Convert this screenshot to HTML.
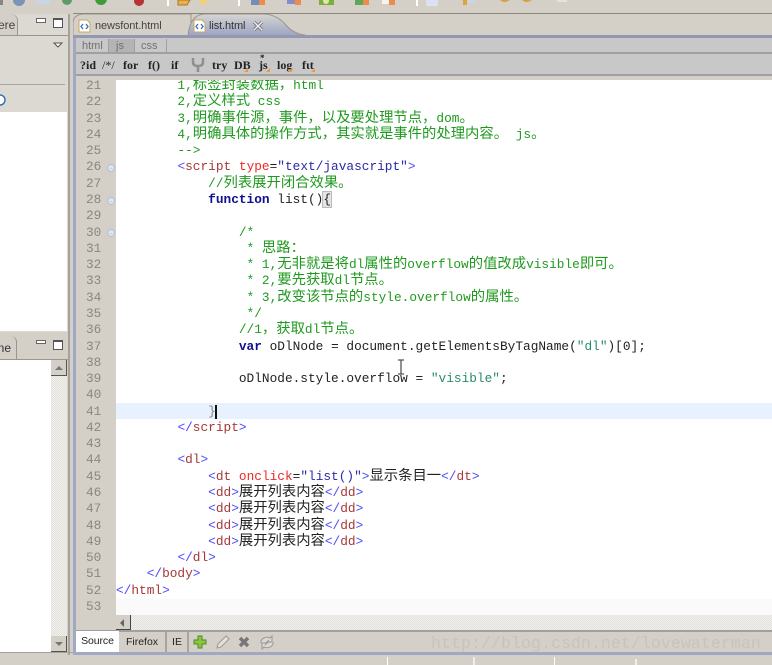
<!DOCTYPE html>
<html><head><meta charset="utf-8">
<style>
html,body{margin:0;padding:0}
body{width:772px;height:665px;overflow:hidden;position:relative;background:#d4d0c8;font-family:"Liberation Sans",sans-serif}
.a{position:absolute}
#code{position:absolute;left:116px;top:80px;width:656px;height:535px;background:#fff;overflow:hidden}
.l{position:absolute;left:0;height:16px;line-height:16px;white-space:pre;font:12.8px/16px "Liberation Mono",monospace;color:#222}
.l i{font:normal 14.33px/0 "Noto Sans CJK SC","WenQuanYi Zen Hei",sans-serif}
.n{position:absolute;left:86px;width:22px;font:12.8px/16px "Liberation Mono",monospace;color:#8a8780;height:16px}
.c{color:#1f9a1f}.b{color:#4a4aff}.t{color:#a83838}.r{color:#f02828}.s{color:#2a2aa8}.g{color:#2a8a6a}.k{color:#101090;font-weight:bold}
.h{background:repeating-conic-gradient(#e2e0db 0 25%,#f2f1ee 0 50%) 0 0/2px 2px}
.tb{position:absolute;top:58px;font:bold 12px/15px "Liberation Serif",serif;color:#222}
.tri{position:absolute;width:0;height:0;border-left:4px solid transparent;border-bottom:4px solid #ef9a3c}
.m{position:absolute;width:6px;height:6px;border-radius:50%;background:linear-gradient(#c9d4e4,#c9d4e4) center/4px 1px no-repeat,#e4e8ee;background-color:#dfe5ee;border:1px solid #b4c0d2;left:107px}
</style></head><body>

<!-- top toolbar clipped icons -->
<svg class="a" style="left:0;top:0" width="772" height="14">
<rect x="0" y="0" width="772" height="13" fill="#d4d0c8"/>
<rect x="0" y="0" width="3" height="5" fill="#8a8780"/>
<circle cx="19" cy="0" r="6" fill="#7c93b8"/>
<rect x="37" y="0" width="13" height="4" fill="#c9d4e4"/>
<circle cx="67" cy="0" r="5" fill="#5f9a6a"/>
<circle cx="101" cy="-1" r="6" fill="#3f9a3a"/>
<circle cx="139" cy="1" r="5" fill="#b8323a"/>
<rect x="167" y="0" width="2" height="6" fill="#fff"/>
<path d="M178 0h12l-3 5h-9z" fill="#e8b050" stroke="#a87820"/>
<path d="M200 0h6l1 4h-7z" fill="#f2d070"/>
<rect x="238" y="0" width="2" height="6" fill="#fff"/>
<rect x="251" y="0" width="12" height="5" fill="#6f8fb8"/><rect x="259" y="0" width="6" height="5" fill="#ee8a4a"/>
<rect x="287" y="0" width="10" height="4" fill="#8a8ac8"/><rect x="295" y="0" width="6" height="5" fill="#ee8a4a"/>
<rect x="319" y="0" width="15" height="5" fill="#7cae3a"/><circle cx="326" cy="1" r="3" fill="#d8e8b0"/>
<rect x="355" y="0" width="10" height="5" fill="#5fa85a"/><rect x="363" y="0" width="6" height="5" fill="#ee8a4a"/>
<rect x="382" y="0" width="9" height="4" fill="#f4f4f4"/><rect x="389" y="0" width="6" height="5" fill="#ee8a4a"/>
<rect x="416" y="0" width="2" height="6" fill="#fff"/>
<rect x="426" y="0" width="12" height="6" fill="#d8e2f0"/>
<rect x="463" y="0" width="4" height="5" fill="#d8a838"/><rect x="467" y="0" width="8" height="3" fill="#c9d4e4"/>
<path d="M500 0h10l-4 2h-3z" fill="#d8a040"/>
<path d="M522 0h10l-4 2h-3z" fill="#d8a040"/>
<rect x="557" y="0" width="10" height="2" fill="#e4e2dd"/>
</svg>
<div class="a" style="left:73px;top:13px;width:699px;height:1px;background:#8a8780"></div>

<!-- left panel top -->
<div class="a" style="left:0;top:14px;width:68px;height:318px;background:#dcd9d2"></div>
<div class="a" style="left:0;top:14px;width:17px;height:21px;background:#d4d0c8;border-right:1px solid #9a968e;border-radius:0 7px 0 0;font:12px/22px 'Liberation Sans',sans-serif;color:#444;overflow:hidden;text-indent:-2px">ere</div>
<div class="a" style="left:0;top:35px;width:68px;height:1px;background:#9a968e"></div>
<div class="a" style="left:36px;top:18px;width:8px;height:3px;border:1px solid #666;background:#fff"></div>
<div class="a" style="left:53px;top:18px;width:8px;height:7px;border:1px solid #555;border-top-width:2px;background:#fff"></div>
<svg class="a" style="left:53px;top:42px" width="11" height="6"><path d="M1 1h8l-4 4z" fill="#fff" stroke="#555"/></svg>
<div class="a" style="left:0;top:84px;width:65px;height:1px;background:#a8a59e"></div>
<svg class="a" style="left:0;top:93px" width="7" height="14"><circle cx="0" cy="7" r="5" fill="#fff" stroke="#3a72b8" stroke-width="1.5"/></svg>
<div class="a" style="left:0;top:112px;width:67px;height:219px;background:#fff"></div>

<!-- left panel bottom -->
<div class="a" style="left:0;top:333px;width:68px;height:319px;background:#d4d0c8;border-radius:0 7px 0 0"></div>
<div class="a" style="left:0;top:336px;width:16px;height:23px;border-right:1px solid #9a968e;border-radius:0 6px 0 0;font:12px/24px 'Liberation Sans',sans-serif;color:#333;overflow:hidden;text-indent:-5px">ine</div>
<div class="a" style="left:36px;top:340px;width:8px;height:2px;border:1px solid #666;background:#fff"></div>
<div class="a" style="left:53px;top:340px;width:8px;height:7px;border:1px solid #555;border-top-width:2px;background:#fff"></div>
<div class="a" style="left:0;top:359px;width:68px;height:1px;background:#9a968e"></div>
<div class="a" style="left:0;top:360px;width:67px;height:292px;background:#fff"></div>
<div class="a h" style="left:51px;top:360px;width:16px;height:292px"></div>
<div class="a" style="left:51px;top:360px;width:15px;height:15px;background:#d4d0c8;border-right:1px solid #555;border-bottom:1px solid #555"></div>
<svg class="a" style="left:54px;top:365px" width="10" height="6"><path d="M1 5h8l-4-4z" fill="#777"/></svg>
<div class="a" style="left:51px;top:636px;width:15px;height:15px;background:#d4d0c8;border-right:1px solid #555;border-bottom:1px solid #555"></div>
<svg class="a" style="left:54px;top:641px" width="10" height="6"><path d="M1 1h8l-4 4z" fill="#777"/></svg>

<!-- dividers -->
<div class="a" style="left:68px;top:14px;width:2px;height:641px;background:#a5a29b"></div>
<div class="a" style="left:70px;top:14px;width:3px;height:641px;background:#d4d0c8"></div>
<div class="a" style="left:73px;top:36px;width:3px;height:619px;background:#a0a8c4"></div>
<div class="a" style="left:0;top:652px;width:73px;height:1px;background:#a5a29b"></div>

<!-- editor tabs -->
<svg class="a" style="left:73px;top:14px" width="699" height="24">
<path d="M0 22V9Q0 1 10 0H118V22z" fill="#d4d0c8" stroke="#9a968e"/>
<defs><linearGradient id="g" x1="0" y1="0" x2="0" y2="1"><stop offset="0" stop-color="#d8d6d2"/><stop offset="1" stop-color="#99a3c4"/></linearGradient></defs>
<path d="M115 22Q117 0 132 0H190Q202 0 211 9Q220 20 232 21V22z" fill="url(#g)" stroke="#9a968e"/>
<rect x="0" y="21" width="699" height="3" fill="#9397b0"/>
</svg>
<svg class="a" style="left:78px;top:19px" width="13" height="14"><path d="M1 1h8l3 3v9H1z" fill="#fff" stroke="#c8a860"/><path d="M5 5L3 7.500l2 2.500M8 5l2 2.500-2 2.500" fill="none" stroke="#3a72b8" stroke-width="1.300"/></svg>
<svg class="a" style="left:193px;top:19px" width="13" height="14"><path d="M1 1h8l3 3v9H1z" fill="#fff" stroke="#c8a860"/><path d="M5 5L3 7.500l2 2.500M8 5l2 2.500-2 2.500" fill="none" stroke="#3a72b8" stroke-width="1.300"/></svg>
<div class="a" style="left:95px;top:18px;font-size:11px;line-height:16px;color:#444;letter-spacing:-.1px">newsfont.html</div>
<div class="a" style="left:209px;top:18px;font-size:11px;line-height:16px;color:#333;letter-spacing:-.1px">list.html</div>
<svg class="a" style="left:252px;top:20px" width="12" height="12"><path d="M2 2l8 8M10 2l-8 8" stroke="#777" stroke-width="3.200"/><path d="M2 2l8 8M10 2l-8 8" stroke="#f4f4f4" stroke-width="1.300"/></svg>

<!-- sub tab bar -->
<div class="a" style="left:76px;top:38px;width:696px;height:38px;background:#c8c8c8"></div>
<div class="a" style="left:76px;top:52px;width:696px;height:2px;background:#a0a0a0"></div>
<div class="a" style="left:76px;top:74px;width:696px;height:2px;background:#a0a0a0"></div>
<div class="a" style="left:108px;top:39px;width:25px;height:13px;background:#b4b4b4;border-left:1px solid #a0a0a0;border-right:1px solid #a0a0a0"></div>
<div class="a" style="left:166px;top:39px;width:1px;height:13px;background:#a0a0a0"></div>
<div class="a" style="left:82px;top:39px;font-size:11px;line-height:14px;color:#707070">html</div>
<div class="a" style="left:116px;top:39px;font-size:11px;line-height:14px;color:#707070">js</div>
<div class="a" style="left:141px;top:39px;font-size:11px;line-height:14px;color:#707070">css</div>

<div class="tb" style="left:80px">?id</div>
<div class="tb" style="left:102px;font-weight:normal">/*/</div>
<div class="tb" style="left:123px">for</div>
<div class="tb" style="left:148px">f()</div>
<div class="tb" style="left:171px">if</div>
<svg class="a" style="left:190px;top:57px" width="16" height="16"><path d="M3 1v4q0 4 5 4t5-4V1M8 9v6" fill="none" stroke="#8f8f8f" stroke-width="2.500"/></svg>
<div class="tb" style="left:212px">try</div>
<div class="tb" style="left:234px">DB</div>
<div class="tb" style="left:259px">js</div>
<div class="a" style="left:260px;top:54px;font:bold 9px/9px 'Liberation Serif',serif;color:#222">*</div>
<div class="tb" style="left:277px">log</div>
<div class="tb" style="left:302px">fιt</div>
<div class="tri" style="left:244px;top:68px"></div>
<div class="tri" style="left:266px;top:68px"></div>
<div class="tri" style="left:288px;top:68px"></div>
<div class="tri" style="left:311px;top:68px"></div>

<!-- gutter -->
<div class="a" style="left:76px;top:76px;width:696px;height:4px;background:#d4d0c8"></div>
<div class="a" style="left:76px;top:80px;width:40px;height:550px;background:#d4d0c8"></div>

<div class="n" style="top:78px">21</div><div class="n" style="top:94.300px">22</div><div class="n" style="top:110.600px">23</div><div class="n" style="top:126.800px">24</div><div class="n" style="top:143.100px">25</div><div class="n" style="top:159.400px">26</div><div class="n" style="top:175.700px">27</div><div class="n" style="top:192px">28</div><div class="n" style="top:208.200px">29</div><div class="n" style="top:224.500px">30</div><div class="n" style="top:240.800px">31</div><div class="n" style="top:257.100px">32</div><div class="n" style="top:273.400px">33</div><div class="n" style="top:289.600px">34</div><div class="n" style="top:305.900px">35</div><div class="n" style="top:322.200px">36</div><div class="n" style="top:338.500px">37</div><div class="n" style="top:354.800px">38</div><div class="n" style="top:371px">39</div><div class="n" style="top:387.300px">40</div><div class="n" style="top:403.600px">41</div><div class="n" style="top:419.900px">42</div><div class="n" style="top:436.200px">43</div><div class="n" style="top:452.400px">44</div><div class="n" style="top:468.700px">45</div><div class="n" style="top:485px">46</div><div class="n" style="top:501.300px">47</div><div class="n" style="top:517.600px">48</div><div class="n" style="top:533.800px">49</div><div class="n" style="top:550.100px">50</div><div class="n" style="top:566.400px">51</div><div class="n" style="top:582.700px">52</div><div class="n" style="top:599px">53</div>
<div class="m" style="top:164px"></div><div class="m" style="top:197px"></div><div class="m" style="top:229px"></div>

<!-- code -->
<div id="code">
<div class="a" style="left:0;top:323px;width:656px;height:16px;background:#e8f2fe"></div>
<div class="a" style="left:0;top:519px;width:656px;height:16px;background:#fafafa"></div>
<div class="a" style="left:99px;top:325px;width:2px;height:14px;background:#111"></div>
<div class="l c" style="top:-2px">        1,<i>标签封装数据，</i>html</div>
<div class="l c" style="top:14.300px">        2,<i>定义样式</i> css</div>
<div class="l c" style="top:30.600px">        3,<i>明确事件源，事件，以及要处理节点，</i>dom<i>。</i></div>
<div class="l c" style="top:46.800px">        4,<i>明确具体的操作方式，其实就是事件的处理内容。</i> js<i>。</i></div>
<div class="l c" style="top:63.100px">        --&gt;</div>
<div class="l" style="top:79.400px">        <span class="b">&lt;</span><span class="t">script</span> <span class="r">type</span>=<span class="s">"text/javascript"</span><span class="b">&gt;</span></div>
<div class="l c" style="top:95.700px">            //<i>列表展开闭合效果。</i></div>
<div class="l" style="top:112px">            <span class="k">function</span> list()<span style="background:#e4e4e4;outline:1px solid #bbb">{</span></div>
<div class="l c" style="top:144.500px">                /*</div>
<div class="l c" style="top:160.800px">                 * <i>思路：</i></div>
<div class="l c" style="top:177.100px">                 * 1,<i>无非就是将</i>dl<i>属性的</i>overflow<i>的值改成</i>visible<i>即可。</i></div>
<div class="l c" style="top:193.400px">                 * 2,<i>要先获取</i>dl<i>节点。</i></div>
<div class="l c" style="top:209.600px">                 * 3,<i>改变该节点的</i>style.overflow<i>的属性。</i></div>
<div class="l c" style="top:225.900px">                 */</div>
<div class="l c" style="top:242.200px">                //1<i>，获取</i>dl<i>节点。</i></div>
<div class="l" style="top:258.500px">                <span class="k">var</span> oDlNode = document.getElementsByTagName(<span class="g">"dl"</span>)[0];</div>
<div class="l" style="top:291px">                oDlNode.style.overflow = <span class="g">"visible"</span>;</div>
<div class="l" style="top:323.600px;color:#888">            }</div>
<div class="l" style="top:339.900px">        <span class="b">&lt;/</span><span class="t">script</span><span class="b">&gt;</span></div>
<div class="l" style="top:372.400px">        <span class="b">&lt;</span><span class="t">dl</span><span class="b">&gt;</span></div>
<div class="l" style="top:388.700px">            <span class="b">&lt;</span><span class="t">dt</span> <span class="r">onclick</span>=<span class="s">"list()"</span><span class="b">&gt;</span><i>显示条目一</i><span class="b">&lt;/</span><span class="t">dt</span><span class="b">&gt;</span></div>
<div class="l" style="top:405px">            <span class="b">&lt;</span><span class="t">dd</span><span class="b">&gt;</span><i>展开列表内容</i><span class="b">&lt;/</span><span class="t">dd</span><span class="b">&gt;</span></div>
<div class="l" style="top:421.300px">            <span class="b">&lt;</span><span class="t">dd</span><span class="b">&gt;</span><i>展开列表内容</i><span class="b">&lt;/</span><span class="t">dd</span><span class="b">&gt;</span></div>
<div class="l" style="top:437.600px">            <span class="b">&lt;</span><span class="t">dd</span><span class="b">&gt;</span><i>展开列表内容</i><span class="b">&lt;/</span><span class="t">dd</span><span class="b">&gt;</span></div>
<div class="l" style="top:453.800px">            <span class="b">&lt;</span><span class="t">dd</span><span class="b">&gt;</span><i>展开列表内容</i><span class="b">&lt;/</span><span class="t">dd</span><span class="b">&gt;</span></div>
<div class="l" style="top:470.100px">        <span class="b">&lt;/</span><span class="t">dl</span><span class="b">&gt;</span></div>
<div class="l" style="top:486.400px">    <span class="b">&lt;/</span><span class="t">body</span><span class="b">&gt;</span></div>
<div class="l" style="top:502.700px"><span class="b">&lt;/</span><span class="t">html</span><span class="b">&gt;</span></div>
</div>

<!-- I-beam cursor -->
<svg class="a" style="left:396px;top:359px" width="10" height="16"><path d="M2 1h6M2 15h6M5 1v14" stroke="#555" stroke-width="1.300" fill="none"/></svg>

<!-- horizontal scrollbar -->
<div class="a h" style="left:116px;top:615px;width:656px;height:15px"></div>
<div class="a" style="left:116px;top:615px;width:14px;height:14px;background:#d4d0c8;border-right:1px solid #444;border-bottom:1px solid #444"></div>
<svg class="a" style="left:119px;top:618px" width="7" height="10"><path d="M5 1v8L1 5z" fill="#666"/></svg>
<div class="a" style="left:76px;top:630px;width:696px;height:2px;background:#a0a0a0"></div>

<!-- bottom tabs -->
<div class="a" style="left:76px;top:631px;width:43px;height:21px;background:#fff;font-size:10.500px;line-height:21px;text-align:center;color:#222;letter-spacing:-.1px">Source</div>
<div class="a" style="left:119px;top:632px;width:46px;height:20px;border-right:2px solid #a8a59e;font-size:10.500px;line-height:20px;text-align:center;color:#222">Firefox</div>
<div class="a" style="left:167px;top:632px;width:20px;height:20px;border-right:2px solid #a8a59e;font-size:10.500px;line-height:20px;text-align:center;color:#222">IE</div>
<svg class="a" style="left:193px;top:635px" width="14" height="14"><path d="M5 1h4v4h4v4H9v4H5V9H1V5h4z" fill="#8cc63f" stroke="#4f8a2a"/></svg>
<svg class="a" style="left:215px;top:634px" width="16" height="16"><path d="M2 14l1-4L11 2l3 3-8 8z" fill="#e4e2dd" stroke="#999"/></svg>
<svg class="a" style="left:238px;top:636px" width="12" height="12"><path d="M2 2l8 8M10 2l-8 8" stroke="#777" stroke-width="3.400"/></svg>
<svg class="a" style="left:259px;top:634px" width="16" height="16"><path d="M2 9a6 5 0 0 1 9-5l2-2v6H8l2-2M14 8a6 5 0 0 1-9 5l-2 2V9h5l-2 2" fill="#dcd9d2" stroke="#999"/></svg>

<!-- watermark -->
<div class="a" style="left:431px;top:635px;font:16.670px/20px 'Liberation Mono',monospace;color:#c8c4bc;white-space:pre;z-index:2">http://blog.csdn.net/lovewaterman</div>

<!-- bottom border & status -->
<div class="a" style="left:73px;top:652px;width:699px;height:3px;background:#a0a8c4"></div>
<div class="a" style="left:0;top:655px;width:772px;height:10px;background:#d4d0c8"></div>
<div class="a" style="left:387px;top:657px;width:1px;height:8px;background:#fff"></div>
<div class="a" style="left:473px;top:657px;width:2px;height:8px;background:#eee"></div>
<div class="a" style="left:554px;top:657px;width:1px;height:8px;background:#fff"></div>
<div class="a" style="left:635px;top:659px;width:2px;height:6px;background:#eee"></div>
</body></html>
